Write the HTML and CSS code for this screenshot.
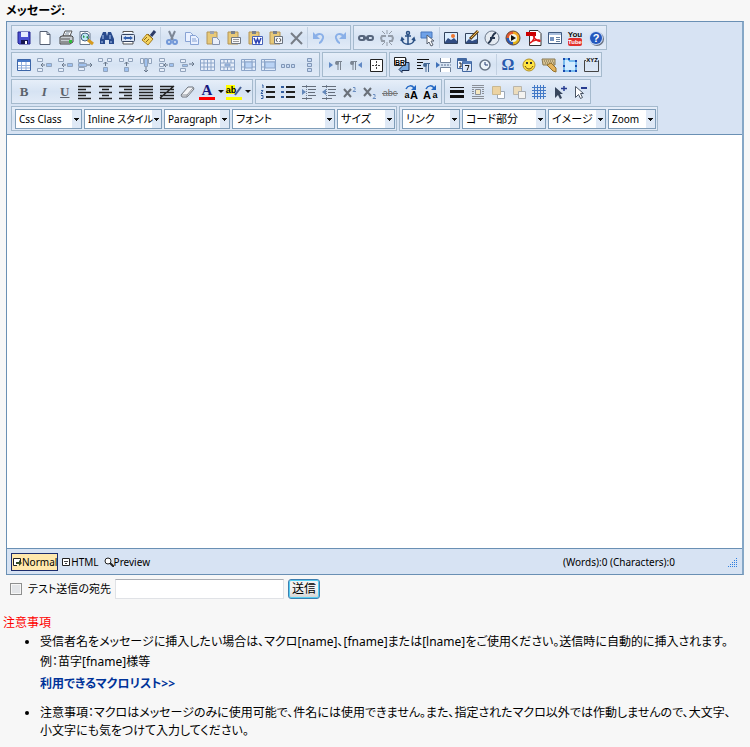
FILE: index.html
```html
<!DOCTYPE html>
<html lang="ja">
<head>
  <meta charset="UTF-8" />
  <title>メッセージ</title>
  <link rel="stylesheet" href="styles.css">
</head>
<body>

<label class="field-title" for="message">メッセージ:</label>

<div class="editor">
  <div class="toolbar">
    <div class="bar-row">
      <div class="group g-edit">
        <button title="Save"><svg viewBox="0 0 16 16"><path d="M2 2h12v12H3l-1-1z" fill="#4a4fd0" stroke="#23238e"/><path d="M5 2h7v5H5z" fill="#e6ecff"/><path d="M5 10h7v4H5z" fill="#15154f"/><path d="M9 11h2v3H9z" fill="#fff"/></svg></button>
        <button title="New"><svg viewBox="0 0 16 16"><path d="M3 1.500h7l3 3v10H3z" fill="#fff" stroke="#555f72"/><path d="M10 1.500v3h3" fill="none" stroke="#555f72"/></svg></button>
        <button title="Print"><svg viewBox="0 0 16 16"><path d="M5 6l2-5h7l-2 5z" fill="#fff" stroke="#555"/><path d="M2 7l2-1h10l1 1v5l-3 2H2z" fill="#c8cdd2" stroke="#444"/><path d="M3 9h9M3 12h8" stroke="#555"/><path d="M8 2h4M7 4h4" stroke="#789"/><path d="M11 10h3v3h-3z" fill="#2ebd3b"/></svg></button>
        <button title="Print preview"><svg viewBox="0 0 16 16"><path d="M2 1.500h8l2 2v11H2z" fill="#fff" stroke="#68788c"/><circle cx="7" cy="7" r="4" fill="#bfe7f7" stroke="#48617e"/><path d="M5 5l2 2-2 1zM8 7l2-1v3z" fill="#279447"/><path d="M10 10l5 4" stroke="#d69b20" stroke-width="3"/></svg></button>
        <button title="Find"><svg viewBox="0 0 16 16"><path d="M4 2h3l1 4 1-4h3l3 7v5h-5v-4H6v4H1V9z" fill="#294b8e"/><path d="M4 5v4M11 5v4M3 11v2M12 11v2" stroke="#adc9f3"/></svg></button>
        <button title="Fit"><svg viewBox="0 0 16 16"><path d="M3 3V1.500h10V3M3 12v2h10v-2" fill="#fff" stroke="#555"/><rect x="1.500" y="4.500" width="13" height="7" rx="1" fill="#dce6f5" stroke="#34435f"/><path d="M3 8l3-2v1h4V6l3 2-3 2V9H6v1z" fill="#315fae"/></svg></button>
        <button title="Clean up"><svg viewBox="0 0 16 16"><path d="M10 6l4-5" stroke="#2b3b68" stroke-width="3"/><path d="M6 4l6 5-5 6-6-5z" fill="#f5d560" stroke="#a77d1e"/><path d="M7 4l5 5M3 10l3-3M5 12l3-3" stroke="#8b671c"/></svg></button>
        <span class="sep"></span>
        <button title="Cut"><svg viewBox="0 0 16 16"><path d="M5 1l4 9M11 1L7 10" stroke="#7d8796" stroke-width="2"/><circle cx="5" cy="12" r="2" fill="none" stroke="#7298d8" stroke-width="2"/><circle cx="11" cy="12" r="2" fill="none" stroke="#7298d8" stroke-width="2"/></svg></button>
        <button title="Copy"><svg viewBox="0 0 16 16" fill="#eaf1ff" stroke="#88a3d4"><path d="M1.500 2.500h5l3 3v6h-8z"/><path d="M6.500 5.500h5l3 3v6h-8z"/><path d="M8 9h4M8 11h5"/></svg></button>
        <button title="Paste"><svg viewBox="0 0 16 16"><path d="M2 2h10v12H2z" fill="#e7c979" stroke="#b49557"/><path d="M5 1h4v3H5z" fill="#9ba3b2"/><path d="M7.500 7.500h4l3 3v4h-7z" fill="#e9effb" stroke="#8492ad"/></svg></button>
        <button title="Paste text"><svg viewBox="0 0 16 16"><path d="M2 2h10v12H2z" fill="#e7c979" stroke="#b49557"/><path d="M5 1h4v3H5z" fill="#777f8c"/><path d="M5.500 7.500h9v6h-9z" fill="#f6f7f9" stroke="#707883"/><path d="M7 9.500h6M7 11.500h6" stroke="#999"/></svg></button>
        <button title="Paste from Word"><svg viewBox="0 0 16 16"><path d="M2 2h10v12H2z" fill="#e7c979" stroke="#b49557"/><path d="M5 1h4v3H5z" fill="#777f8c"/><path d="M5.500 6.500h10v8h-10z" fill="#fff" stroke="#4662b9"/><path d="M7 8l2 5 1.500-4 1.500 4 2-5" fill="none" stroke="#2d43b4" stroke-width="1.500"/></svg></button>
        <button title="Paste HTML"><svg viewBox="0 0 16 16"><path d="M2 2h10v12H2z" fill="#e7c979" stroke="#b49557"/><path d="M5 1h4v3H5z" fill="#777f8c"/><path d="M6.500 6.500h8v7h-8z" fill="#f4f7fb" stroke="#69727f"/><path d="M9.500 8L8 10l1.500 2M11.500 8l1.500 2-1.500 2" fill="none" stroke="#555"/></svg></button>
        <button title="Delete"><svg viewBox="0 0 16 16"><path d="M3 3l11 11M14 2L3 14" stroke="#777d86" stroke-width="2"/></svg></button>
        <span class="sep"></span>
        <button title="Undo"><svg viewBox="0 0 16 16"><path d="M4 7c3-5 9-3 8 1-1 3-3 5-4 5" fill="none" stroke="#8ab0e8" stroke-width="2"/><path d="M2 2v7h7z" fill="#8ab0e8"/></svg></button>
        <button title="Redo"><svg viewBox="0 0 16 16"><path d="M12 7c-3-5-9-3-8 1 1 3 3 5 4 5" fill="none" stroke="#8ab0e8" stroke-width="2"/><path d="M14 2v7H7z" fill="#8ab0e8"/></svg></button>
      </div>
      <div class="group g-insert">
        <button title="Link"><svg viewBox="0 0 16 16" fill="none" stroke="#56657c" stroke-width="2"><rect x="1" y="6" width="6" height="4" rx="2"/><rect x="9" y="6" width="6" height="4" rx="2"/><path d="M5 8h6"/></svg></button>
        <button title="Unlink"><svg viewBox="0 0 16 16" fill="none" stroke="#949da9" stroke-width="2"><path d="M7 6H3l-1 2 1 3h3M9 6h4l1 2-1 3h-3"/><path d="M3 1l3 3M8 0v4M13 1l-3 3M3 15l3-3M8 16v-4M13 15l-3-3" stroke-width="1"/></svg></button>
        <button title="Anchor"><svg viewBox="0 0 16 16" fill="none" stroke="#294f83" stroke-width="1.500"><circle cx="8" cy="3" r="1.500"/><path d="M8 5v9M5 6h6M2 9c0 7 12 7 12 0M1 11l1-3 2 2M15 11l-1-3-2 2"/></svg></button>
        <button title="Select"><svg viewBox="0 0 16 16"><path d="M1 2h11v6H1z" fill="#6ea1e7" stroke="#4777bd"/><path d="M7 5v9l2-2 2 4 2-1-2-4h3z" fill="#fff" stroke="#58616f"/></svg></button>
        <span class="sep"></span>
        <button title="Image"><svg viewBox="0 0 16 16"><path d="M1.500 2.500h13v11h-13z" fill="#dceeff" stroke="#33445d"/><path d="M2 12l3-4 3 2 3-2 3 3v2H2z" fill="#314d83"/><circle cx="10" cy="6" r="2" fill="#ee762f"/></svg></button>
        <button title="Edit image"><svg viewBox="0 0 16 16"><path d="M1.500 3.500h12v10h-12z" fill="#dceeff" stroke="#33445d"/><path d="M2 12l3-3 3 2 5-2v4H2z" fill="#314d83"/><path d="M6 9l8-8" stroke="#654319" stroke-width="3"/><path d="M7 8l7-7" stroke="#efbd4c"/></svg></button>
        <button title="Flash"><svg viewBox="0 0 16 16"><circle cx="8" cy="8" r="7" fill="#e5ebf2" stroke="#6a7789"/><path d="M12 3c-4 0-4 9-8 10M6 8h5" fill="none" stroke="#25354d" stroke-width="2"/></svg></button>
        <button title="Media"><svg viewBox="0 0 16 16"><path d="M8 8V1a7 7 0 0 0-7 7z" fill="#e4572e"/><path d="M8 8h7a7 7 0 0 0-7-7z" fill="#f3a822"/><path d="M8 8v7a7 7 0 0 0 7-7z" fill="#e4b51c"/><path d="M8 8H1a7 7 0 0 0 7 7z" fill="#2858b8"/><circle cx="8" cy="8" r="4" fill="#f3f6e8"/><path d="M6 5l5 3-5 3z" fill="#111"/><circle cx="8" cy="8" r="7" fill="none" stroke="#654936"/></svg></button>
        <button title="PDF"><svg viewBox="0 0 16 16"><path d="M3.500.5H12l3 3v12H3.500z" fill="#fff" stroke="#333"/><path d="M0 2h10v4H0z" fill="#c00"/><path d="M4 13c4-2 5-7 4-7-2 0 3 6 6 5 0-2-7-1-10 2z" fill="none" stroke="#e01818" stroke-width="1.500"/></svg></button>
        <button title="Template"><svg viewBox="0 0 16 16"><path d="M1.500 2.500h13v11h-13z" fill="#fff" stroke="#405a80"/><path d="M2 3h12v2H2z" fill="#a8bedd"/><path d="M3 7h4v4H3z" fill="#7392c0"/><path d="M9 7.500h4M9 9.500h4M9 11.500h4" stroke="#657f9f"/></svg></button>
        <button title="YouTube"><svg viewBox="0 0 16 16"><rect x="1" y="8" width="14" height="8" rx="2" fill="#e1302d"/><text x="8" y="7" class="you">You</text><text x="8" y="14" class="tube">Tube</text></svg></button>
        <button title="Help"><svg viewBox="0 0 16 16"><circle cx="9" cy="9" r="7" fill="#687180"/><circle cx="8" cy="8" r="7" fill="#c7d8f6"/><circle cx="8" cy="8" r="6" fill="#2458bd"/><text x="8" y="12" class="help">?</text></svg></button>
      </div>
    </div>

    <div class="bar-row">
      <div class="group g-table">
        <button title="Table"><svg viewBox="0 0 16 16"><path d="M1.500 2.500h13v11h-13z" fill="#fff" stroke="#3d66a8"/><path d="M2 3h12v2H2z" fill="#4778c7"/><path d="M2 8.500h12M2 11h12M5.500 5v8M10 5v8" stroke="#91aedb"/></svg></button>
        <button title="Row above"><svg viewBox="0 0 16 16" fill="#e8effa" stroke="#92a4bc"><path d="M1.500 1.500h5v3h-5zM1.500 11.500h5v3h-5z"/><path d="M10.500 6.500h5v3h-5z" fill="#9fc1ef"/><path d="M5 8h4M7 6L5 8l2 2" stroke="#68778a"/></svg></button>
        <button title="Row below"><svg viewBox="0 0 16 16" fill="#e8effa" stroke="#92a4bc"><path d="M1.500 1.500h5v3h-5zM1.500 11.500h5v3h-5z"/><path d="M10.500 6.500h5v3h-5z" fill="#9fc1ef"/><path d="M5 8h4M7 6L5 8l2 2" stroke="#68778a"/></svg></button>
        <button title="Delete row"><svg viewBox="0 0 16 16" fill="#e8effa" stroke="#92a4bc"><path d="M1.500 2.500h6v3h-6zM1.500 10.500h6v3h-6z"/><path d="M1.500 6.500h8v3h-8z" fill="#9fc1ef"/><path d="M10 8h5M13 6l2 2-2 2" fill="none" stroke="#68778a"/></svg></button>
        <button title="Column left"><svg viewBox="0 0 16 16" fill="#e8effa" stroke="#92a4bc"><path d="M1.500 1.500h4v3h-4zM10.500 1.500h4v3h-4z"/><path d="M6.500 10.500h4v4h-4z" fill="#9fc1ef"/><path d="M8.500 5v4M6.500 7l2-2 2 2" fill="none" stroke="#68778a"/></svg></button>
        <button title="Column right"><svg viewBox="0 0 16 16" fill="#e8effa" stroke="#92a4bc"><path d="M1.500 1.500h4v3h-4zM10.500 1.500h4v3h-4z"/><path d="M6.500 10.500h4v4h-4z" fill="#9fc1ef"/><path d="M8.500 5v4M6.500 7l2-2 2 2" fill="none" stroke="#68778a"/></svg></button>
        <button title="Delete column"><svg viewBox="0 0 16 16" fill="#e8effa" stroke="#92a4bc"><path d="M2.500 1.500h3v5h-3zM10.500 1.500h3v5h-3z"/><path d="M6.500 1.500h3v8h-3z" fill="#9fc1ef"/><path d="M8 10v5M6 13l2 2 2-2" fill="none" stroke="#68778a"/></svg></button>
        <button title="Insert cell"><svg viewBox="0 0 16 16" fill="#e8effa" stroke="#92a4bc"><path d="M1.500 1.500h5v3h-5zM1.500 6.500h4v3h-4zM1.500 11.500h5v3h-5z"/><path d="M11.500 6.500h4v3h-4z" fill="#9fc1ef"/><path d="M6 8h4M8 6L6 8l2 2" stroke="#68778a"/></svg></button>
        <button title="Delete cell"><svg viewBox="0 0 16 16" fill="#e8effa" stroke="#92a4bc"><path d="M1.500 2.500h5v3h-5zM1.500 11.500h5v3h-5z"/><path d="M3.500 7.500h5v2h-5z" fill="#9fc1ef"/><path d="M10 7h5M13 5l2 2-2 2" fill="none" stroke="#68778a"/></svg></button>
        <button title="Split cell"><svg viewBox="0 0 16 16" fill="#e8effa" stroke="#8ca5c9"><path d="M1.500 2.500h14v11h-14zM1 6h14M1 10h14M5 2v12M8.500 2v12M12 2v12"/></svg></button>
        <button title="Merge cells"><svg viewBox="0 0 16 16" fill="#e8effa" stroke="#8ca5c9"><path d="M1.500 2.500h14v11h-14zM1 6h14M1 10h14M5 2v4M5 10v4M8.500 2v4M8.500 10v4M12 2v4M12 10v4"/><path d="M6 7h5v2H6z" fill="#97b8e8"/></svg></button>
        <button title="Cell properties"><svg viewBox="0 0 16 16" fill="#e1ebfa" stroke="#8ca5c9"><path d="M1.500 2.500h14v11h-14zM1 5h14M4.500 2v12M12 2v12M1 10h3M12 10h3"/><path d="M5 5h7v6H5z" fill="#b9d2f4"/></svg></button>
        <button title="Row properties"><svg viewBox="0 0 16 16" fill="#e1ebfa" stroke="#8ca5c9"><path d="M1.500 2.500h14v11h-14zM1 5h14M4.500 2v12M1 10h3"/><path d="M5 5h10v6H5z" fill="#b9d2f4"/></svg></button>
        <button title="Split horizontally"><svg viewBox="0 0 16 16" fill="#c7daf5" stroke="#8197b7"><path d="M1.500 7.500h3v3h-3zM6.500 7.500h3v3h-3zM11.500 7.500h3v3h-3z"/></svg></button>
        <button title="Split vertically"><svg viewBox="0 0 16 16" fill="#c7daf5" stroke="#8197b7"><path d="M6.500 1.500h4v3h-4zM6.500 6.500h4v3h-4zM6.500 11.500h4v3h-4z"/></svg></button>
      </div>
      <div class="group g-dir">
        <button title="Left to right"><svg viewBox="0 0 16 16"><path d="M2 5l4 3-4 3z" fill="#6189c4"/><path d="M11 4v9M13.500 4v9M9 4.500h6" stroke="#7b8592"/><circle cx="10" cy="6" r="2" fill="#7b8592"/></svg></button>
        <button title="Right to left"><svg viewBox="0 0 16 16"><path d="M14 5l-4 3 4 3z" fill="#6189c4"/><path d="M5 4v9M7.500 4v9M3 4.500h6" stroke="#7b8592"/><circle cx="4" cy="6" r="2" fill="#7b8592"/></svg></button>
        <button title="Borders"><svg viewBox="0 0 16 16"><path d="M2.500 2.500h12v12h-12z" fill="#fff" stroke="#222"/><path d="M8.500 4v9M4 8.500h9" stroke="#444" stroke-dasharray="2 1"/></svg></button>
      </div>
      <div class="group g-object">
        <button title="Line break"><svg viewBox="0 0 16 16"><path d="M1 1.500h11v4h3v8H8v2l-3-3 3-3v-1H1z" fill="#78a9df" stroke="#172a4d"/><path d="M.5.500h11v8H.5z" fill="#fff" stroke="#222"/><text x="6" y="8" class="br">BR</text></svg></button>
        <button title="Paragraph"><svg viewBox="0 0 16 16"><path d="M2 2.500h12M2 5.500h6M2 8.500h4M2 11.500h6" stroke="#111" /><path d="M11 6v9M13.500 6v9M9 6.500h6" stroke="#456995"/><circle cx="10" cy="8" r="2" fill="#456995"/></svg></button>
        <button title="Page break"><svg viewBox="0 0 16 16"><path d="M4.500 1v4.500h10V1M4.500 15v-4.500h10V15" fill="#fff" stroke="#71839c"/><path d="M5 8h10" stroke="#5d7190" stroke-dasharray="2 1"/><path d="M0 5l4 3-4 3z" fill="#3f70b8"/></svg></button>
        <button title="Date"><svg viewBox="0 0 16 16"><path d="M1.500 1.500h9v10h-9z" fill="#f2f7ff" stroke="#4167a1"/><path d="M2 2h8v2H2z" fill="#4167a1"/><path d="M6.500 4.500h9v10h-9z" fill="#dfeafa" stroke="#4167a1"/><path d="M7 4h8v3H7z" fill="#547cb8"/><path d="M3 6h2v4H3M9 8.500h4l-2 5" fill="none" stroke="#222"/></svg></button>
        <button title="Time"><svg viewBox="0 0 16 16"><circle cx="8" cy="8" r="5" fill="#eef4fa" stroke="#687586" stroke-width="1.500"/><path d="M8 5v3h3" fill="none" stroke="#253d72"/></svg></button>
        <span class="sep"></span>
        <button title="Special character"><svg viewBox="0 0 16 16"><text x="8" y="13" class="omega">Ω</text></svg></button>
        <button title="Emoticon"><svg viewBox="0 0 16 16"><circle cx="8" cy="8" r="6" fill="#ffe443" stroke="#b3922d"/><path d="M5 5h2v2H5zM9 5h2v2H9z" fill="#333"/><path d="M4 9c2 4 6 4 8 0" fill="none" stroke="#704b12"/></svg></button>
        <button title="Keyboard"><svg viewBox="0 0 16 16"><path d="M1 2h13v6H2z" fill="#d8c28e" stroke="#877855"/><path d="M3 4h10M4 6h9" stroke="#6f654f" stroke-dasharray="1 1"/><path d="M6 8l4-2 5 5v4l-3-1z" fill="#e4b35d" stroke="#94712b"/></svg></button>
        <button title="Box"><svg viewBox="0 0 16 16"><path d="M2 5V2h5v2h7v10H2z" fill="#d3ecff" stroke="#168be1"/><path d="M1 1h2v2H1zM6 1h2v2H6zM13 3h2v2h-2zM1 8h2v2H1zM1 13h2v2H1zM7 13h2v2H7zM13 13h2v2h-2zM13 8h2v2h-2z" fill="#1848ad"/></svg></button>
        <button title="Group box"><svg viewBox="0 0 16 16"><path d="M3 3.500H1.500v11h14v-11H15" fill="none" stroke="#444"/><text x="9" y="5" class="xyz">XYZ</text></svg></button>
      </div>
    </div>

    <div class="bar-row">
      <div class="group g-format">
        <button title="Bold" class="letter bold">B</button>
        <button title="Italic" class="letter italic">I</button>
        <button title="Underline" class="letter underline">U</button>
        <button title="Align left"><svg viewBox="0 0 16 16"><path d="M1 2.500h13M1 5.500h8M1 8.500h13M1 11.500h8M1 14.500h13" stroke="#222" stroke-width="1.500"/></svg></button>
        <button title="Center"><svg viewBox="0 0 16 16"><path d="M1 2.500h13M4 5.500h7M1 8.500h13M4 11.500h7M1 14.500h13" stroke="#222" stroke-width="1.500"/></svg></button>
        <button title="Align right"><svg viewBox="0 0 16 16"><path d="M1 2.500h13M6 5.500h8M1 8.500h13M6 11.500h8M1 14.500h13" stroke="#222" stroke-width="1.500"/></svg></button>
        <button title="Justify"><svg viewBox="0 0 16 16"><path d="M1 2.500h14M1 5.500h14M1 8.500h14M1 11.500h14M1 14.500h14" stroke="#222" stroke-width="1.500"/></svg></button>
        <button title="No alignment"><svg viewBox="0 0 16 16"><path d="M1 2.500h14M1 5.500h14M1 8.500h14M1 11.500h14M1 14.500h14M1 14L15 2" stroke="#222" stroke-width="1.500"/></svg></button>
        <button title="Remove format"><svg viewBox="0 0 16 16"><path d="M9 3h5l1 2-7 8H3l-1-2z" fill="#f3f4f7" stroke="#6d737c"/><path d="M3 11h5l6-7M8 11v2" fill="none" stroke="#8d929a"/></svg></button>
        <button title="Font color" class="wide"><svg viewBox="0 0 16 16"><text x="8" y="11" class="fore">A</text><path d="M0 13h16v3H0z" fill="#f00"/></svg><i class="caret"></i></button>
        <button title="Highlight" class="wide"><svg viewBox="0 0 16 16"><path d="M0 1h9v9H0zM0 13h16v3H0z" fill="#ff0"/><text x="5" y="9" class="hl">ab</text><path d="M9 11l6-8" stroke="#455f95" stroke-width="2"/></svg><i class="caret"></i></button>
      </div>
      <div class="group g-list">
        <button title="Numbered list"><svg viewBox="0 0 16 16"><path d="M6 3h9M6 8h9M6 13h9" stroke="#222" stroke-width="2"/><path d="M2 1h1v3M1 6.500h2L1 9.500h2M1 11.500h2v3H1" fill="none" stroke="#315c9f"/></svg></button>
        <button title="Bulleted list"><svg viewBox="0 0 16 16"><path d="M6 3h9M6 8h9M6 13h9" stroke="#222" stroke-width="2"/><path d="M1 2h3v2H1zM1 7h3v2H1zM1 12h3v2H1z" fill="#315c9f"/></svg></button>
        <button title="Indent"><svg viewBox="0 0 16 16"><path d="M1 2.500h14M7 5.500h8M7 8.500h7M7 11.500h8M1 14.500h10" stroke="#656e7b"/><path d="M1 5l4 3-4 3z" fill="#6387b9"/><path d="M5.500 1v15" stroke="#75849a" stroke-dasharray="1 1"/></svg></button>
        <button title="Outdent"><svg viewBox="0 0 16 16"><path d="M1 2.500h14M7 5.500h8M7 8.500h7M7 11.500h8M1 14.500h10" stroke="#656e7b"/><path d="M5 5L1 8l4 3z" fill="#6387b9"/><path d="M5.500 1v15" stroke="#75849a" stroke-dasharray="1 1"/></svg></button>
        <button title="Superscript"><svg viewBox="0 0 16 16"><path d="M2 5l7 8M9 5l-7 8" stroke="#6a7079" stroke-width="2"/><path d="M11 3.500h2v2l-2 2h3" fill="none" stroke="#6c8fc1"/></svg></button>
        <button title="Subscript"><svg viewBox="0 0 16 16"><path d="M2 4l7 8M9 4l-7 8" stroke="#6a7079" stroke-width="2"/><path d="M11 10.500h2v2l-2 2h3" fill="none" stroke="#6c8fc1"/></svg></button>
        <button title="Strikethrough"><svg viewBox="0 0 16 16"><text x="8" y="12" class="strike">abc</text><path d="M0 9.500h16" stroke="#777"/></svg></button>
        <button title="Upper case"><svg viewBox="0 0 16 16"><text x="4" y="14" class="case">a</text><text x="11" y="15" class="case big">A</text><path d="M3 5c2-4 6-4 8-1" fill="none" stroke="#2468c4" stroke-width="1.500"/><path d="M13 1v5H8z" fill="#2468c4"/></svg></button>
        <button title="Lower case"><svg viewBox="0 0 16 16"><text x="4" y="15" class="case big">A</text><text x="12" y="14" class="case">a</text><path d="M3 5c2-4 6-4 8-1" fill="none" stroke="#2468c4" stroke-width="1.500"/><path d="M13 1v5H8z" fill="#2468c4"/></svg></button>
      </div>
      <div class="group g-layer">
        <button title="Rule"><svg viewBox="0 0 16 16"><path d="M1 3h14v1H1zM1 6h14v3H1zM1 11h14v3H1z" fill="#111"/></svg></button>
        <button title="Wrap"><svg viewBox="0 0 16 16"><path d="M2 1.500h12M2 3.500h12M2 5.500h2M12 5.500h2M2 7.500h2M12 7.500h2M2 9.500h2M12 9.500h2M2 12.500h12M2 14.500h12" stroke="#8a8f97"/><path d="M5.500 5.500h5v5h-5z" fill="#f5e8c0" stroke="#8a8f97"/></svg></button>
        <button title="Bring forward"><svg viewBox="0 0 16 16"><path d="M7.500 7.500h7v7h-7z" fill="#fff" stroke="#9ca9b9"/><path d="M2.500 2.500h8v8h-8z" fill="#ecd3a2" stroke="#c9b892"/></svg></button>
        <button title="Send backward"><svg viewBox="0 0 16 16"><path d="M2.500 2.500h8v8h-8z" fill="#ecdcbb" stroke="#b9b5ab"/><path d="M7.500 7.500h7v7h-7z" fill="#f4f3f0" stroke="#a7acb2"/></svg></button>
        <button title="Grid"><svg viewBox="0 0 16 16"><path d="M1 3.500h14M1 6.500h14M1 9.500h14M1 12.500h14M3.500 1v14M6.500 1v14M9.500 1v14M12.500 1v14" stroke="#4279c7"/></svg></button>
        <button title="Select add"><svg viewBox="0 0 16 16"><path d="M3 3v11l3-3 2 4 2-1-2-4h3z" fill="#37465d"/><path d="M9 4.500h6M12 2v5" stroke="#283c91" stroke-width="1.500"/></svg></button>
        <button title="Select remove"><svg viewBox="0 0 16 16"><path d="M3.500 2.500v11l3-3 2 4 2-1-2-4h3z" fill="#fff" stroke="#4a5565"/><path d="M9 4h6" stroke="#283c91" stroke-width="2"/></svg></button>
      </div>
    </div>

    <div class="bar-row">
      <div class="group g-style">
        <select class="s-css" aria-label="Css Class"><option>Css Class</option></select>
        <select class="s-inline" aria-label="Inline スタイル"><option>Inline スタイル</option></select>
        <select class="s-para" aria-label="Paragraph"><option>Paragraph</option></select>
        <select class="s-font" aria-label="フォント"><option>フォント</option></select>
        <select class="s-size" aria-label="サイズ"><option>サイズ</option></select>
      </div>
      <div class="group g-parts">
        <select class="s-size" aria-label="リンク"><option>リンク</option></select>
        <select class="s-code" aria-label="コード部分"><option>コード部分</option></select>
        <select class="s-size" aria-label="イメージ"><option>イメージ</option></select>
        <select class="s-zoom" aria-label="Zoom"><option>Zoom</option></select>
      </div>
    </div>
  </div>

  <textarea id="message" class="edit-area"></textarea>

  <div class="status">
    <button class="tab active"><svg viewBox="0 0 10 10"><path d="M5 8.500H1.500v-7h7V5" fill="#fff" stroke="#222"/><path d="M4 5h3V3l3 3-3 3V7H4z" fill="#344a25"/></svg>Normal</button>
    <button class="tab"><svg viewBox="0 0 10 10"><path d="M1.500 1.500h7v7h-7z" fill="#fff" stroke="#222"/><path d="M3 4.500h4M4 6.500h2" stroke="#444"/></svg>HTML</button>
    <button class="tab"><svg viewBox="0 0 10 10"><circle cx="4" cy="4" r="3" fill="#fff" stroke="#222"/><path d="M6 6l4 4" stroke="#222" stroke-width="2"/></svg>Preview</button>
    <span class="count">(Words):0 (Characters):0</span>
    <svg class="grip" viewBox="0 0 10 10"><path d="M8 1h1v1H8zM6 3h1v1H6zM8 3h1v1H8zM4 5h1v1H4zM6 5h1v1H6zM8 5h1v1H8zM2 7h1v1H2zM4 7h1v1H4zM6 7h1v1H6zM8 7h1v1H8zM0 9h1v1H0zM2 9h1v1H2zM4 9h1v1H4zM6 9h1v1H6zM8 9h1v1H8z" fill="#2f7fe0"/></svg>
  </div>
</div>

<form class="test-send">
  <input type="checkbox" id="test">
  <label for="test">テスト送信の宛先</label>
  <input type="text" class="address" aria-label="宛先">
  <button type="button" class="send">送信</button>
</form>

<section class="notes">
  <h2>注意事項</h2>
  <ul>
    <li>
      受信者名をメッセージに挿入したい場合は、マクロ[name]、[fname]または[lname]をご使用ください。送信時に自動的に挿入されます。<br>例：苗字[fname]様等
      <a href="#">利用できるマクロリスト&gt;&gt;</a>
    </li>
    <li class="caution">注意事項：マクロはメッセージのみに使用可能で、件名には使用できません。また、指定されたマクロ以外では作動しませんので、大文字、小文字にも気をつけて入力してください。</li>
  </ul>
</section>

</body>
</html>
```
FILE: styles.css
```css
* { box-sizing: border-box; }
body {
  margin: 0;
  background: #f7f7f7;
  color: #000;
  font-family: "Noto Sans", "Noto Sans CJK JP", sans-serif;
  font-size: 12px;
  line-height: 20px;
  font-feature-settings: "palt";
}
button, select, input, textarea {
  font-family: inherit;
  font-feature-settings: inherit;
  color: #000;
}
.field-title {
  display: block;
  padding: 1px 6px 0;
  font-weight: 600;
}

.editor {
  margin: 0 6px 0 6px;
  border: 1px solid #6a90b4;
  border-right: 2px solid #86a7c6;
}
.toolbar {
  display: flex;
  flex-direction: column;
  gap: 2px;
  padding: 3px 4px;
  background: #d7e3f3;
  border-bottom: 1px solid #6a90b4;
}
.bar-row {
  display: flex;
  flex-wrap: wrap;
  gap: 2px;
}
.group {
  display: flex;
  align-items: center;
  justify-content: space-between;
  height: 25px;
  padding: 0 0 0 2px;
  border: 1px solid #a5bacd;
  background: linear-gradient(#e6eef9, #d6e3f3 50%, #e2ebf7);
}
.g-edit { width: 340px; }
.g-insert { width: 254px; }
.g-table { width: 309px; }
.g-dir { width: 65px; }
.g-object { width: 213px; }
.g-format { width: 242px; }
.g-list { width: 187px; }
.g-layer { width: 147px; }
.group button {
  display: flex;
  align-items: center;
  justify-content: center;
  width: 20px;
  height: 20px;
  padding: 0;
  border: 0;
  background: none;
}
.group button svg {
  width: 16px;
  height: 16px;
  flex: none;
  overflow: visible;
}
.group .wide {
  width: 27px;
  gap: 3px;
}
.caret {
  border: 3px solid transparent;
  border-top-color: #111;
  border-bottom: 0;
}
.sep {
  width: 1px;
  height: 21px;
  background: #c3d1e2;
}

.letter {
  font-family: "Liberation Serif", serif;
  font-size: 13px;
  line-height: 20px;
}
.group .letter { color: #5b626c; font-weight: bold; }
.italic { font-style: italic; }
.underline { text-decoration: underline; }

svg text {
  font-family: "Liberation Sans", sans-serif;
  font-weight: bold;
  text-anchor: middle;
}
.you { font-size: 8px; fill: #111; }
.tube { font-size: 6px; fill: #fff; }
.help { font-size: 11px; fill: #fff; }
.br { font-size: 7px; }
.xyz { font-size: 6px; }
svg .omega { font-family: "Liberation Serif", serif; font-size: 16px; fill: #2859ad; }
svg .fore { font-family: "Liberation Serif", serif; font-size: 15px; fill: #17177c; }
.hl { font-size: 9px; }
svg .strike { font-size: 9px; font-weight: normal; fill: #666; }
.case { font-size: 9px; }
.big { font-size: 11px; }

.g-style, .g-parts {
  justify-content: flex-start;
  gap: 2px;
  padding: 0 1px 0 3px;
}
.g-parts { padding-left: 2px; }
select {
  appearance: none;
  height: 20px;
  padding: 0 0 0 3px;
  border: 1px solid #7f9db9;
  border-radius: 0;
  background:
    conic-gradient(from -45deg at 50% 100%, #111 90deg, transparent 0) right 2px top 8px / 5px 3px no-repeat,
    linear-gradient(#dfe9f6, #dfe9f6) right 0 top 0 / 9px 100% no-repeat,
    #fff;
  font-size: 11px;
}
.s-css { width: 67px; }
.s-inline { width: 78px; }
.s-para { width: 66px; }
.s-css, .s-inline, .s-para, .s-zoom { font-size: 10px; }
.s-font { width: 103px; }
.s-size { width: 58px; }
.s-code { width: 84px; }
.s-zoom { width: 48px; }

.edit-area {
  display: block;
  width: 100%;
  height: 413px;
  padding: 4px;
  border: 0;
  outline: 0;
  resize: none;
  background: #fff;
}
.status {
  display: flex;
  align-items: center;
  gap: 1px;
  height: 26px;
  padding: 0 4px;
  border-top: 1px solid #6a90b4;
  background: #d7e3f3;
  font-size: 10px;
}
.tab {
  display: flex;
  align-items: center;
  height: 18px;
  padding: 0 2px;
  border: 0;
  background: none;
  font-size: 10px;
}
.tab svg { width: 10px; height: 10px; }
.tab.active {
  border: 1px solid #1c2c6b;
  padding: 0;
  background: #ffe8ad;
}
.count {
  margin-left: auto;
  padding-right: 52px;
}
.grip { width: 10px; height: 10px; }

.test-send {
  display: flex;
  align-items: center;
  gap: 4px;
  padding: 4px 10px 0;
}
.test-send label { font-size: 11px; }
.test-send input[type=checkbox] {
  appearance: none;
  width: 12px;
  height: 12px;
  margin: 0 2px 0 0;
  border: 1px solid #8e8f8f;
  background: #e3e5e8;
  box-shadow: inset 0 0 0 1px #f6f6f6;
}
.address {
  width: 169px;
  height: 20px;
  border: 1px solid #e0e2e6;
  border-top-color: #aaadb3;
  background: #fff;
}
.send {
  height: 20px;
  padding: 0 3px;
  border: 1px solid #3c7fb1;
  border-radius: 3px;
  box-shadow: inset 0 0 0 1px #55cdf2;
  background: linear-gradient(#f2f2f2 50%, #d2d2d2);
  font-size: 12px;
  line-height: 16px;
}

.notes {
  padding: 15px 3px 8px;
}
.notes h2 {
  margin: 0;
  color: #f00;
  font-size: 12px;
  font-weight: normal;
  line-height: 18px;
}
.notes ul {
  margin: 0;
  padding: 0 8px 0 37px;
}
.notes a {
  display: block;
  padding: 2px 0 10px;
  color: #039;
  font-weight: bold;
  text-decoration: none;
}
.notes .caution { line-height: 18px; }
```
